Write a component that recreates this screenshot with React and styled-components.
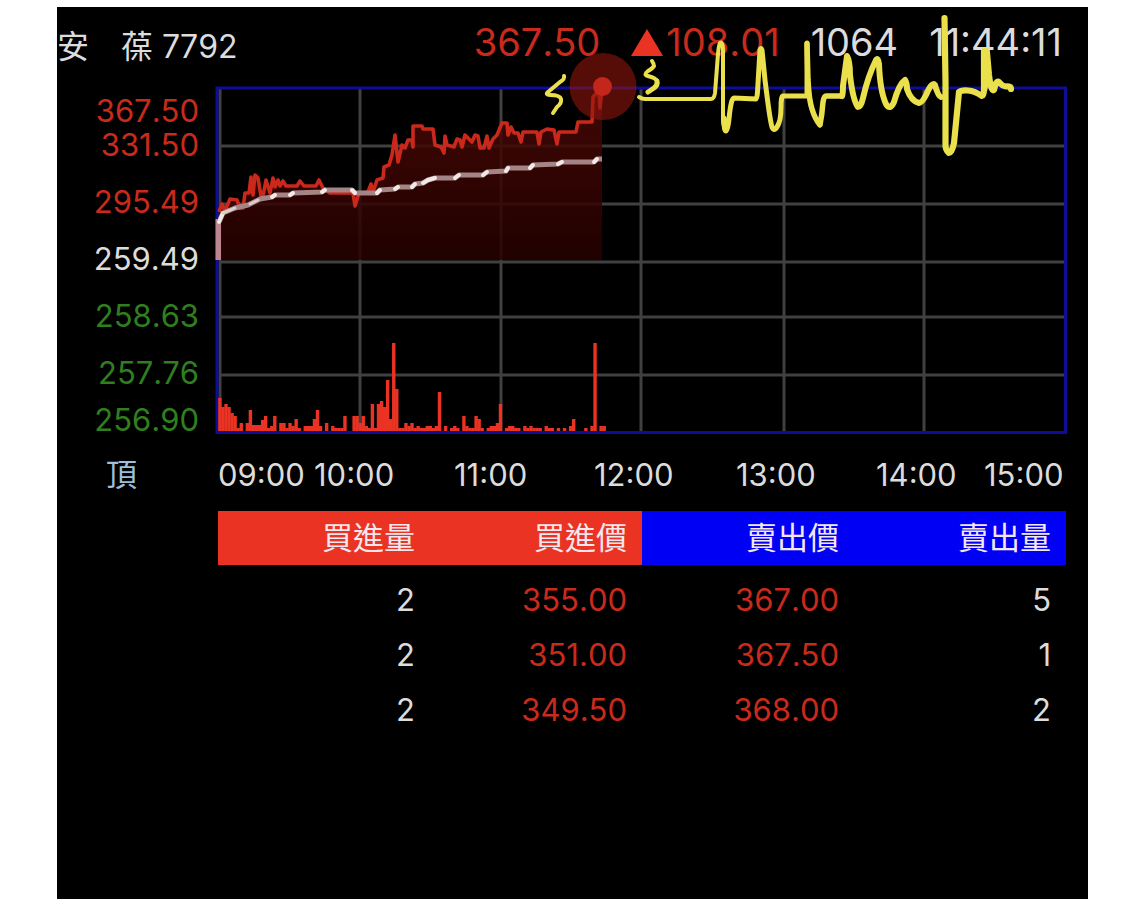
import styled, { createGlobalStyle } from "styled-components";

const GlobalStyle = createGlobalStyle`
  * {
    box-sizing: border-box;
  }
  body {
    margin: 0;
    background: #fff;
    font-family: Inter, "Noto Sans CJK TC", sans-serif;
    font-kerning: none;
  }
`

const colors = {
  up: "#c92a1c",
  down: "#2f7f1f",
  flat: "#dcdcdc",
  note: "#9dbfdc",
}

const Page = styled.div`
  padding: 7px 37px 0 57px;
`

const Panel = styled.main`
  min-height: calc(100vh - 7px);
  padding-right: 22px;
  background: #000;
  color: ${colors.flat};
`

const Header = styled.header`
  height: 80px;
  display: flex;
  justify-content: space-between;
  align-items: flex-start;
  white-space: nowrap;
`

const StockName = styled.h1`
  margin: 0;
  padding-top: 20px;
  font-size: 32px;
  line-height: 40px;
  font-weight: 400;
  white-space: pre;
`

const Quote = styled.div`
  display: flex;
  gap: 31px;
  padding: 14px 4px 0 0;
  font-size: 38px;
  line-height: 42px;
`

const Figure = styled.span`
  display: flex;
  align-items: center;
  gap: 3px;
  color: ${props => colors[props.$tone]};
`

const Body = styled.section`
  display: grid;
  grid-template-columns: 161px minmax(0, 1fr);
`

const PriceScale = styled.div`
  display: grid;
  grid-template-rows: 34px 34px repeat(4, 57px) 47px;
  align-items: end;
  justify-items: end;
  padding: 7px 19px 0 0;
`

const ScaleLabel = styled.span`
  font-size: 31px;
  line-height: 34px;
  color: ${props => colors[props.$tone]};
`

const Chart = styled.svg`
  position: relative;
  display: block;
  width: 100%;
  height: 346px;
  overflow: visible;
`

const NoteLabel = styled.div`
  padding: 18px 0 0 49px;
  font-size: 31px;
  line-height: 40px;
  color: ${colors.note};
`

const TimeScale = styled.div`
  display: grid;
  grid-template-columns: 96fr 140fr 140fr 142fr 140fr 108fr 82fr;
  padding: 22px 0 20px;
  font-size: 31px;
  line-height: 32px;
`

const OrderBook = styled.table`
  grid-column: 2;
  width: 100%;
  table-layout: fixed;
  border-collapse: collapse;

  tbody::before {
    content: "";
    display: block;
    height: 7px;
  }
`

const HeadCell = styled.th`
  height: 54px;
  padding: 0 15px 0 0;
  background: ${props => props.$side === "buy" ? "#ea3323" : "#0000f5"};
  color: #f4e6ee;
  font-size: 31px;
  line-height: 40px;
  font-weight: 400;
  text-align: right;
`

const Cell = styled.td`
  height: 55px;
  padding: 0 15px 0 0;
  color: ${props => colors[props.$tone]};
  font-size: 31px;
  line-height: 40px;
  text-align: right;
`

const scale = [
  ["367.50", "up"],
  ["331.50", "up"],
  ["295.49", "up"],
  ["259.49", "flat"],
  ["258.63", "down"],
  ["257.76", "down"],
  ["256.90", "down"],
]

const hours = ["09:00", "10:00", "11:00", "12:00", "13:00", "14:00", "15:00"]

const orders = [
  ["2", "355.00", "367.00", "5"],
  ["2", "351.00", "367.50", "1"],
  ["2", "349.50", "368.00", "2"],
]

const price = [
  [219, 212], [222, 204], [225, 211], [230, 199], [237, 200], [240, 208], [243, 208], [245, 193],
  [249, 193], [251, 177], [253, 195], [255, 175], [258, 178], [261, 196], [263, 196], [266, 180],
  [270, 193], [273, 178], [275, 187], [278, 180], [280, 186], [283, 181], [286, 186], [297, 186],
  [300, 181], [304, 186], [316, 186], [319, 180], [323, 188], [330, 193], [353, 193], [355, 206],
  [359, 193], [368, 192], [371, 184], [373, 192], [377, 180], [383, 178], [384, 167], [389, 165],
  [392, 155], [395, 135], [398, 162], [402, 145], [405, 148], [408, 140], [412, 140], [413, 147],
  [413, 126], [422, 126], [423, 129], [433, 129], [435, 145], [441, 147], [444, 153], [445, 136],
  [447, 145], [454, 147], [457, 139], [460, 140], [462, 147], [465, 135], [468, 138], [472, 142],
  [475, 135], [478, 136], [480, 148], [484, 148], [487, 136], [489, 148], [493, 139], [497, 135],
  [502, 123], [507, 123], [508, 135], [511, 127], [514, 133], [518, 133], [521, 142], [523, 132],
  [537, 132], [539, 144], [541, 132], [547, 129], [554, 130], [557, 144], [559, 132], [576, 132],
  [578, 122], [592, 122], [593, 97], [599, 90], [600, 108], [602, 90],
]

const average = [
  [219, 222], [223, 213], [235, 208], [248, 205], [260, 199], [272, 197], [275, 195], [290, 195],
  [293, 193], [322, 192], [325, 190], [352, 190], [355, 193], [377, 193], [380, 190], [395, 189],
  [398, 187], [412, 187], [415, 184], [423, 183], [428, 180], [435, 178], [455, 178], [459, 175],
  [483, 175], [487, 172], [506, 171], [508, 168], [530, 168], [533, 165], [558, 164], [562, 162],
  [594, 162], [597, 159], [602, 159],
]

const volume = [
  33, 24, 27, 24, 18, 15, 3, 8, 0, 8, 21, 6, 6, 6, 11, 15, 3, 5, 15, 0, 8, 8, 3, 8, 5, 12, 3, 0, 5, 5,
  5, 12, 21, 5, 0, 8, 0, 5, 3, 3, 3, 15, 0, 0, 15, 15, 8, 15, 5, 3, 27, 3, 27, 30, 24, 51, 12, 88, 42, 3,
  3, 8, 5, 8, 3, 5, 3, 3, 5, 5, 3, 5, 39, 0, 5, 0, 3, 5, 3, 0, 15, 5, 3, 3, 15, 12, 3, 0, 3, 5,
  5, 8, 27, 0, 3, 5, 5, 3, 3, 0, 5, 3, 5, 3, 3, 3, 0, 5, 3, 3, 0, 3, 0, 3, 0, 5, 12, 0, 0, 0,
  3, 0, 5, 88, 0, 5, 5,
]

const toLine = points => points.map(p => p.join(",")).join(" ")

// the average line is brighter wherever it steps
const steps = average.slice(1)
  .map((point, i) => [average[i], point])
  .filter(([a, b]) => Math.abs(a[1] - b[1]) > 1 && b[0] - a[0] < 8)

function Triangle() {
  return (
    <svg width="32" height="28" viewBox="0 0 32 28" aria-hidden="true">
      <path d="M16 1 L32 28 H0 Z" fill="#ea3323" />
    </svg>
  )
}

function PriceChart() {
  return (
    <Chart viewBox="218 87 848 346" preserveAspectRatio="none" role="img" aria-label="7792">
      <defs>
        <linearGradient id="area" gradientUnits="userSpaceOnUse" x1="0" y1="90" x2="0" y2="260">
          <stop offset="0" stopColor="#4c0905" />
          <stop offset="1" stopColor="#260000" />
        </linearGradient>
      </defs>

      <g stroke="#404040" strokeWidth="3">
        {[220, 360, 501, 641, 784, 924].map(x => <line key={x} x1={x} x2={x} y1="89" y2="431" />)}
        {[146, 204, 262, 317, 375].map(y => <line key={y} x1="219" x2="1065" y1={y} y2={y} />)}
      </g>
      <rect x="217" y="88" width="848.5" height="344.5" fill="none" stroke="#0d0d99" strokeWidth="3" />

      <polygon points={`219,260 ${toLine(price)} 602,260`} fill="url(#area)" fillOpacity="0.85" />
      <g fill="#ea3323">
        {volume.map((h, i) => h > 0 && (
          <rect key={i} x={218.2 + i * 3.05} y={431 - h} width="3.4" height={h} />
        ))}
      </g>
      <polyline points={toLine(price)} fill="none" stroke="#c9281b" strokeWidth="3.6" strokeLinejoin="round" />
      <rect x="215.5" y="219" width="5.5" height="41" fill="#bd8590" />
      <polyline points={toLine(average)} fill="none" stroke="#a48484" strokeWidth="5" strokeLinejoin="round" />
      <g stroke="#f1e9e9" strokeWidth="4" strokeLinecap="round">
        {steps.map(([a, b], i) => <line key={i} x1={a[0]} y1={a[1]} x2={b[0]} y2={b[1]} />)}
      </g>
      <path d="M223 213 L235 208 M250 204 L258 200" stroke="#ddcccc" strokeWidth="3" strokeLinecap="round" />

      <circle cx="603" cy="86.5" r="33.5" fill="#8f160d" fillOpacity="0.6" />
      <circle cx="602.5" cy="86.5" r="9.5" fill="#c3271b" />

      <g fill="none" stroke="#e9e04b" strokeLinecap="round" strokeLinejoin="round">
        <path strokeWidth="4" d="M564 76 Q565 79 560 82 L548 92 Q545 95 550 95 Q560 95 561 99 Q562 103 557 107 L553 113" />
        <path strokeWidth="4" d="M652 61 Q654 64 654 66 Q653 68 648 71 Q643 75 648 76 Q656 78 657 81 Q658 85 655 87" />
        <path strokeWidth="5" d="M657 81 Q658 85 654 88 L648 92" />
        <path strokeWidth="4" d="M639 97 Q642 99 645 99 H711 Q714 99 715 93 L718 54 Q719 42 721 42.5 Q723 43 723 51 V121 Q724 131 726 131" />
        <path strokeWidth="5" d="M724 118 Q724 131 726 131 Q728 129 729 119 Q731 98 734 98 L756 99 Q757 99 757.5 92 L760 50 Q761 47 762 50 L765 80 Q770 121 772 127 Q774 132 777 127 Q781 121 781 108 Q781 96 783 96 H807 V43" />
        <path strokeWidth="5.5" d="M807 44 L808 80 Q809 100 812 109 Q815 119 820 125 Q822 115 823 102 Q824 96 826 96 H842" />
        <path strokeWidth="6" d="M842 96 Q843 94 843 86 L847 56 Q850 61 850 75 Q853 101 858 107 Q861 107 863 98 Q868 76 876 60 Q878 57 879 64 Q880 91 886 104 Q890 111 894 102 Q899 84 905 80 Q907 83 907 89 Q911 101 919 103 Q922 103 926 95 Q932 81 935 85 Q938 96 941 97" />
        <path strokeWidth="6.2" d="M944.5 18 L945.5 82 V143 Q945 150 949 153 Q952 153 954 143 L959 92 Q961 90 968 90.5 Q975 91 982 96 Q984 96 984 88 V51 Q986 50 987 53 L989 75 Q991 92 994 90 Q996 80 999 82 Q1002 86 1006 86.5 Q1011 86 1011 89" />
      </g>
      <path d="M984.5 51 H986.5 L988 73 L984 91" fill="#e9e04b" stroke="#e9e04b" strokeWidth="6" strokeLinejoin="round" />
    </Chart>
  )
}

export default function App() {
  return (
    <Page>
      <GlobalStyle />
      <Panel>
        <Header>
          <StockName>安　葆 7792</StockName>
          <Quote>
            <Figure $tone="up">367.50</Figure>
            <Figure $tone="up"><Triangle />108.01</Figure>
            <Figure $tone="flat">1064</Figure>
            <Figure $tone="flat">11:44:11</Figure>
          </Quote>
        </Header>

        <Body>
          <PriceScale>
            {scale.map(([value, tone]) => <ScaleLabel key={value} $tone={tone}>{value}</ScaleLabel>)}
          </PriceScale>
          <PriceChart />

          <NoteLabel>頂</NoteLabel>
          <TimeScale>
            {hours.map(hour => <span key={hour}>{hour}</span>)}
          </TimeScale>

          <OrderBook>
            <thead>
              <tr>
                <HeadCell $side="buy">買進量</HeadCell>
                <HeadCell $side="buy">買進價</HeadCell>
                <HeadCell $side="sell">賣出價</HeadCell>
                <HeadCell $side="sell">賣出量</HeadCell>
              </tr>
            </thead>
            <tbody>
              {orders.map(([buyQty, buy, sell, sellQty]) => (
                <tr key={buy}>
                  <Cell $tone="flat">{buyQty}</Cell>
                  <Cell $tone="up">{buy}</Cell>
                  <Cell $tone="up">{sell}</Cell>
                  <Cell $tone="flat">{sellQty}</Cell>
                </tr>
              ))}
            </tbody>
          </OrderBook>
        </Body>
      </Panel>
    </Page>
  )
}
